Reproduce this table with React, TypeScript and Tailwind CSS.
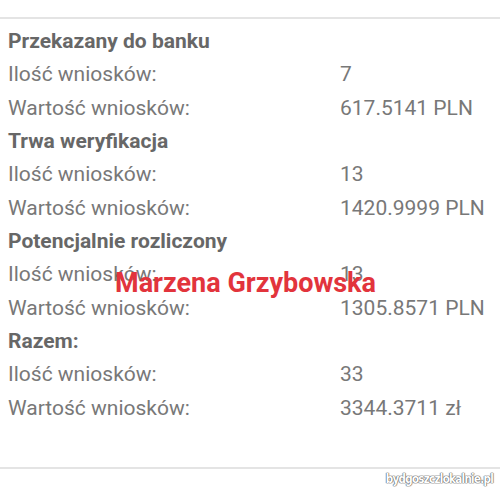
import React from 'react';

const sections = [
  { title: 'Przekazany do banku', count: '7', value: '617.5141 PLN' },
  { title: 'Trwa weryfikacja', count: '13', value: '1420.9999 PLN' },
  { title: 'Potencjalnie rozliczony', count: '13', value: '1305.8571 PLN' },
  { title: 'Razem:', count: '33', value: '3344.3711 zł' },
];

const Row = ({ label, value }: { label: string; value: string }) => (
  <div className="flex h-[33.33px] items-center text-[#787878]">
    <span className="w-[332px] shrink-0">{label}</span>
    <span>{value}</span>
  </div>
);

const App = () => {
  return (
    <div className="relative h-[500px] w-[500px] overflow-hidden bg-white font-['Roboto',sans-serif] text-[21px]">
      <div className="mt-[17px] border-t-2 border-[#e4e4e4] pl-2 pt-[6px] pb-[42px]">
        {sections.map((s) => (
          <div key={s.title}>
            <div className="flex h-[33.33px] items-center font-bold text-[#676767]">{s.title}</div>
            <Row label="Ilość wniosków:" value={s.count} />
            <Row label="Wartość wniosków:" value={s.value} />
          </div>
        ))}
      </div>
      <div className="border-t-2 border-[#e4e4e4]" />
      <div className="flex justify-end pr-[7px] pt-[3px]">
        <span
          className="font-['DejaVu_Sans_Condensed',sans-serif] text-[11.5px] font-bold leading-[14px] tracking-[-0.7px] text-white"
          style={{ textShadow: '0 0 1px #666, 0 0 1px #666, 0 0 1px #666, 0 0 1px #666' }}
        >
          bydgoszczlokalnie.pl
        </span>
      </div>
      <div className="absolute left-[115px] top-[265px] text-[27px] font-bold leading-[36px] text-[#e2343c]">
        Marzena Grzybowska
      </div>
    </div>
  );
};

export default App;
